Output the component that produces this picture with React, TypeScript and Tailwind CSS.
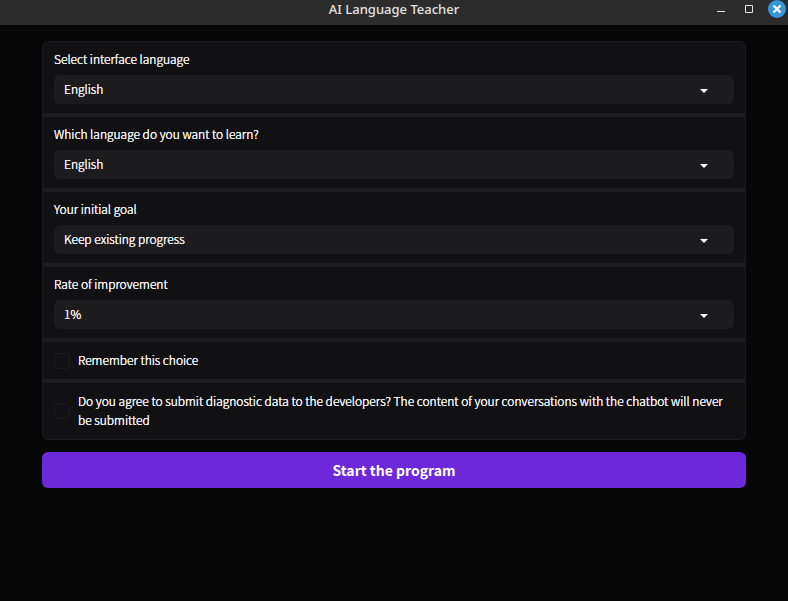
const fields = [
  { id: "interface-language", label: "Select interface language", options: ["English"] },
  { id: "target-language", label: "Which language do you want to learn?", options: ["English"] },
  { id: "goal", label: "Your initial goal", options: ["Keep existing progress"] },
  { id: "rate", label: "Rate of improvement", options: ["1%"] },
]

const checkboxes = [
  { id: "remember", label: "Remember this choice" },
  {
    id: "diagnostics",
    label:
      "Do you agree to submit diagnostic data to the developers? The content of your conversations with the chatbot will never be submitted",
  },
]

function TitleBar() {
  return (
    <header className="grid h-[25px] grid-cols-[1fr_auto_1fr] bg-[#2c2c2c] text-[#e4e4e4]">
      <h1 className="col-start-2 font-['Noto_Sans',sans-serif] text-[13px] leading-[18px] font-medium">
        AI Language Teacher
      </h1>
      <div className="flex items-start justify-end gap-[10px] pr-[2px]">
        <button type="button" aria-label="Minimize" className="size-[18px]">
          <svg viewBox="0 0 18 18" className="size-[18px]" fill="currentColor" shapeRendering="crispEdges">
            <path d="M5 11h8v1H5z" />
          </svg>
        </button>
        <button type="button" aria-label="Maximize" className="size-[18px]">
          <svg viewBox="0 0 18 18" className="size-[18px]" fill="none" stroke="currentColor">
            <path d="M5.5 5.5h7v7h-7z" />
          </svg>
        </button>
        <button type="button" aria-label="Close" className="size-[18px]">
          <svg viewBox="0 0 18 18" className="size-[18px]">
            <circle cx="9" cy="9" r="9" fill="#3498d8" />
            <path d="M5.5 5.5l7 7M12.5 5.5l-7 7" stroke="#f4f4f4" strokeWidth="2.4" />
          </svg>
        </button>
      </div>
    </header>
  )
}

export default function App() {
  return (
    <div className="flex min-h-screen flex-col bg-[#060606] font-['Noto_Sans_CJK_SC',sans-serif] text-[#ececee]">
      <TitleBar />

      <form className="flex flex-col gap-3 px-[42px] py-4" onSubmit={(e) => e.preventDefault()}>
        {/* The shadow keeps the light weight readable on the dark panel */}
        <div className="flex flex-col gap-1 overflow-hidden rounded-md border border-[#1c1c1e] bg-[#1c1c1e] text-[12px] font-light [text-shadow:0_0_0_#ececee,0_0_0_#ececee]">
          {fields.map((field) => (
            <div key={field.id} className="flex flex-col gap-2 bg-[#111113] px-[11px] py-[9px]">
              <label htmlFor={field.id} className="leading-4">
                {field.label}
              </label>
              <div className="grid items-center">
                <select
                  id={field.id}
                  className="col-start-1 row-start-1 h-[29px] w-full appearance-none rounded-md bg-[#1c1c1e] px-[10px] pb-[2px] [text-shadow:inherit]"
                >
                  {field.options.map((option) => (
                    <option key={option}>{option}</option>
                  ))}
                </select>
                <svg
                  viewBox="0 0 18 18"
                  className="pointer-events-none col-start-1 row-start-1 mr-[21px] size-[18px] justify-self-end"
                  fill="#ffffff"
                >
                  <path d="M5 8l4 4 4-4z" />
                </svg>
              </div>
            </div>
          ))}

          {checkboxes.map((item) => (
            <label
              key={item.id}
              htmlFor={item.id}
              className="flex items-center gap-2 bg-[#111113] px-[11px] py-2 leading-[19px]"
            >
              <input
                id={item.id}
                type="checkbox"
                className="size-4 shrink-0 appearance-none rounded-sm border border-[#1c1c1e] checked:bg-[#6d28d9]"
              />
              <span className="pb-[2px]">{item.label}</span>
            </label>
          ))}
        </div>

        <button type="submit" className="h-9 rounded-md bg-[#6d28d9] text-[14px] font-bold text-white">
          Start the program
        </button>
      </form>
    </div>
  )
}
